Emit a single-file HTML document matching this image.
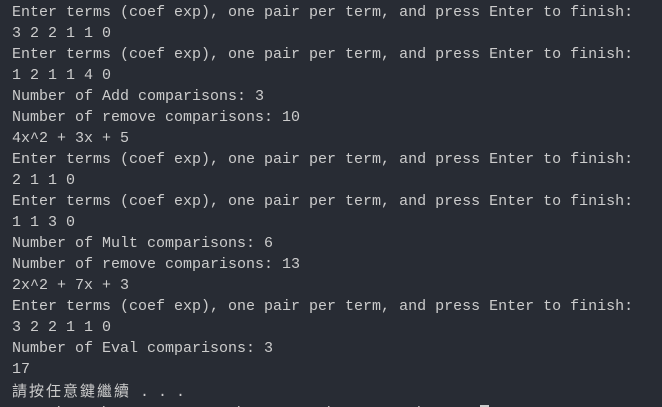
<!DOCTYPE html>
<html><head><meta charset="utf-8"><style>
html,body{margin:0;padding:0;background:#282c34;width:662px;height:407px;overflow:hidden}
pre{margin:0;padding:2px 0 0 12px;font-family:"Liberation Mono","Noto Sans CJK TC",monospace;font-size:15px;line-height:21px;color:#cccccc;white-space:pre}
.cur{display:inline-block;width:9px;height:16px;background:#cccccc;vertical-align:top;margin-top:2px}
.cjk{font-family:"Noto Sans CJK TC",sans-serif;letter-spacing:2px}
</style></head><body><pre>Enter terms (coef exp), one pair per term, and press Enter to finish:
3 2 2 1 1 0
Enter terms (coef exp), one pair per term, and press Enter to finish:
1 2 1 1 4 0
Number of Add comparisons: 3
Number of remove comparisons: 10
4x^2 + 3x + 5
Enter terms (coef exp), one pair per term, and press Enter to finish:
2 1 1 0
Enter terms (coef exp), one pair per term, and press Enter to finish:
1 1 3 0
Number of Mult comparisons: 6
Number of remove comparisons: 13
2x^2 + 7x + 3
Enter terms (coef exp), one pair per term, and press Enter to finish:
3 2 2 1 1 0
Number of Eval comparisons: 3
17
<span class="cjk">請按任意鍵繼續</span> . . .
PS D:\Data\_PROGRAM_CODE_\NEW_DS_HW\NEW_DS_HW\HW3>  <span class="cur"></span></pre></body></html>
